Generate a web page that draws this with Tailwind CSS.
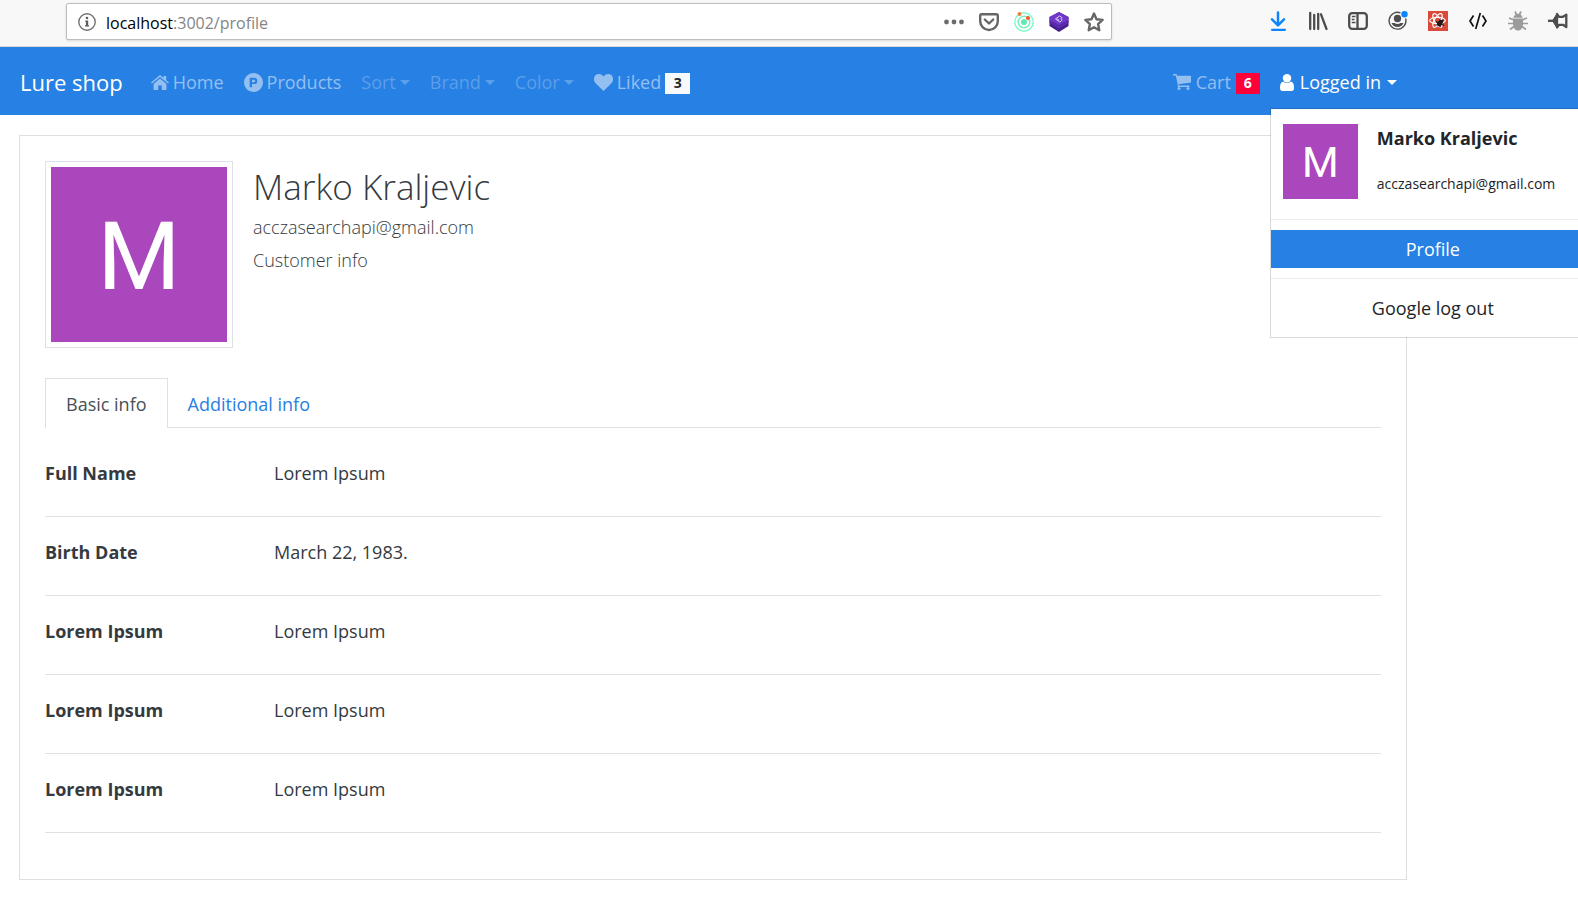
<!DOCTYPE html>
<html lang="en">
<head>
<meta charset="utf-8">
<title>Lure shop</title>
<script src="https://cdn.jsdelivr.net/npm/@tailwindcss/browser@4"></script>
</head>
<body class="min-h-screen overflow-x-hidden bg-white font-['Open_Sans','Noto_Sans',sans-serif] text-lg text-[#343a40]">

<!-- Browser toolbar -->
<div class="flex h-[47px] items-start border-b border-[#d8d8d8] bg-[#f8f8f8] pt-[3px] pr-[10px] pl-[66px] text-[#4d4d4f]">
  <div class="mr-[156px] flex h-[37px] flex-1 items-center rounded-xs border border-[#bcbcbc] bg-white px-[7px] shadow-sm">
    <button aria-label="Site information" class="p-1">
      <svg class="size-[18px]" viewBox="0 0 18 18"><circle cx="9" cy="9" r="8.2" fill="none" stroke="#737373" stroke-width="1.4"/><circle cx="9" cy="5" r="1.3" fill="#5e5e5e"/><path d="M7.2 7.5H10.200v4.800h.9v1.2H7v-1.2H7.900V8.700h-.7z" fill="#5e5e5e"/></svg>
    </button>
    <div class="ml-[6px] flex-1 pt-[2px] text-base"><span class="text-black">localhost</span><span class="text-[#858585]">:3002/profile</span></div>
    <div class="flex items-center gap-[15px]">
      <button aria-label="Page actions"><svg class="size-5" viewBox="0 0 20 20" fill="#6b6b6d"><circle cx="2.5" cy="10" r="2.4"/><circle cx="10" cy="10" r="2.4"/><circle cx="17.5" cy="10" r="2.4"/></svg></button>
      <button aria-label="Save to Pocket"><svg class="size-5" viewBox="0 0 20 20" fill="none" stroke="#666668" stroke-width="2.4" stroke-linecap="round" stroke-linejoin="round"><path d="M2.8 2.2h14.4q1.6 0 1.6 1.6v5.4a8.8 8.8 0 0 1-17.6 0V3.800q0-1.600 1.600-1.600z"/><path d="M5.800 7.500 10 11.500l4.200-4"/></svg></button>
      <button aria-label="Orbit extension"><svg class="size-5" viewBox="0 0 20 20" fill="none"><circle cx="10" cy="10" r="9.200" stroke="#7dfbd0" stroke-width="1.400"/><circle cx="10" cy="10" r="5.800" stroke="#72f2b4" stroke-width="1.400"/><circle cx="10" cy="10" r="3" fill="#5fe8b8"/><circle cx="5.500" cy="2" r="2" fill="#f47b3c"/><circle cx="14" cy="6" r="2.100" fill="#f4572c"/></svg></button>
      <button aria-label="Bootstrap extension"><svg class="size-5" viewBox="0 0 20 20"><path d="M10 0 19.500 5v9L10 20 .5 14V5z" fill="#45208c"/><path d="M.5 8 10 14l9.500-6v3L10 17 .5 11z" fill="#5a2bab"/><path d="M10 0 19.500 5v3L10 13.500.5 8V5z" fill="#7038c8"/><path d="m6.500 7 4-3 1.800 1c1.200.8.500 1.700-.5 1.900 1.200.2 1.500 1.300.4 2.100L10.800 10zM8 6.800l2.200 1.500" fill="none" stroke="#ded0f8" stroke-width="1"/></svg></button>
      <button aria-label="Bookmark this page"><svg class="size-5" viewBox="0 0 20 20" fill="none" stroke="#666668" stroke-width="2.400" stroke-linejoin="round"><path d="m10 1.600 2.500 5.600 6.100.7-4.500 4.200 1.200 6.100L10 15.200l-5.300 3 1.200-6.100-4.500-4.200 6.100-.7z"/></svg></button>
    </div>
  </div>
  <div class="flex h-[36px] items-center gap-5">
    <button aria-label="Downloads"><svg class="size-5" viewBox="0 0 20 20" fill="none" stroke="#0a84ff" stroke-width="2.500" stroke-linecap="round" stroke-linejoin="round"><path d="M10 1.500v12.500M4 8.300 10 14.300 16 8.300"/><path d="M4 18.800h13" stroke-width="2.200"/></svg></button>
    <button aria-label="Library"><svg class="size-5" viewBox="0 0 20 20" fill="none" stroke="#4d4d4f" stroke-width="2.300" stroke-linecap="round"><path d="M2.200 2v16M6.200 4v14M10.200 3v15M13 3.300l5.500 14.700" /></svg></button>
    <button aria-label="Sidebar"><svg class="size-5" viewBox="0 0 20 20" fill="none" stroke="#4d4d4f" stroke-width="2.300"><rect x="1.200" y="2.200" width="17.600" height="15.600" rx="3"/><path d="M9.500 2v16"/><path d="M3.800 5.500H7.500M3.800 8.500H6.500M3.800 11.500H7.500" stroke-width="1.300"/></svg></button>
    <button aria-label="Account"><svg class="size-5" viewBox="0 0 20 20"><path d="M12.500 1.900A8.400 8.400 0 1 0 17.600 7.500" fill="none" stroke="#4d4d4f" stroke-width="1.400"/><circle cx="9.500" cy="7.500" r="3.700" fill="#4d4d4f"/><path d="M3.500 12h3q3 2.200 6 0h3a6.500 6.500 0 0 1-12 0z" fill="#4d4d4f"/><circle cx="16.500" cy="3.300" r="3.200" fill="#0a84ff"/></svg></button>
    <button aria-label="React developer tools"><svg class="size-5" viewBox="0 0 20 20"><rect width="20" height="20" fill="#d94a38"/><g fill="none" stroke="#fff" stroke-width="1.200"><ellipse cx="9.500" cy="9.500" rx="7.800" ry="3.100"/><ellipse cx="9.500" cy="9.500" rx="7.800" ry="3.100" transform="rotate(60 9.500 9.500)"/><ellipse cx="9.500" cy="9.500" rx="7.800" ry="3.100" transform="rotate(120 9.500 9.500)"/></g><ellipse cx="12" cy="12" rx="2.400" ry="3.600" transform="rotate(40 12 12)" fill="#221a1a"/><path d="m8 10.500 8 4M8.500 14l7-5M12 7.500v9" stroke="#221a1a" stroke-width="1.100"/></svg></button>
    <button aria-label="Page source"><svg class="size-5" viewBox="0 0 20 20" fill="none" stroke="#111" stroke-width="1.700"><path d="M5.500 4.500 2 10l3.500 5.500M14.500 4.500l3.500 5.500-3.500 5.500M12.300 2 7.700 18"/></svg></button>
    <button aria-label="Bug tool"><svg class="size-5" viewBox="0 0 20 20" fill="none" stroke="#9b9b9b" stroke-width="1.700"><path d="M5 7.500h10v6q-.8 6-5 6t-5-6z" fill="#9b9b9b" stroke="none"/><path d="M6.500 6q1-2.500 3.500-2.500T13.500 6z" fill="#9b9b9b"/><path d="M7 .5 8.500 3.500M13 .5l-1.500 3M1 7l5 2M19 7l-5 2M0 12.500h20M2 18.500l4-3M18 18.500l-4-3"/></svg></button>
    <button aria-label="Pin"><svg class="size-5" viewBox="0 0 20 20" fill="none" stroke="#4d4d4f" stroke-width="2.300" stroke-linejoin="round"><path d="M0 9.800h8"/><path d="M4.500 9.800 8.700 3.200v13.200z" fill="#4d4d4f" stroke-width="1"/><path d="M9 3v13.500L11 13.800H15L18.300 16V3.600L15 5.800H11z"/></svg></button>
  </div>
</div>

<!-- Site navigation -->
<nav class="relative flex h-[68px] items-center bg-[#2780e3] pt-[2px] pr-[171px] pl-5 text-white/50">
  <a href="#" class="mr-[18px] text-[22px] text-white">Lure shop</a>
  <ul class="flex flex-1 items-center">
    <li><a href="#" class="flex items-center gap-1 px-[10px]">
      <svg class="h-[15px] w-[18px]" viewBox="0 0 18 15" fill="currentColor"><path d="M9 3.600 15.500 9v5.200q0 .8-.8.800H10.800V10.500H7.200V15H3.300q-.8 0-.8-.800V9z"/><path d="M9 0 12.500 2.900V1h2.700v4.200L18 7.500l-.9 1.100L9 2 .9 8.600 0 7.500z"/></svg>Home</a></li>
    <li><a href="#" class="flex items-center gap-1 px-[10px]">
      <svg class="size-[19px]" viewBox="0 0 20 20" fill="currentColor" fill-rule="evenodd"><path d="M10 0a10 10 0 1 1 0 20 10 10 0 0 1 0-20zM6 5v10h2.400v-3.300h2.200a3.350 3.350 0 0 0 0-6.700zm2.400 2h2a1.350 1.350 0 0 1 0 2.700h-2z"/></svg>Products</a></li>
    <li><button class="flex items-center gap-1 px-[10px] text-white/25">Sort<svg class="h-[5px] w-[10px]" viewBox="0 0 10 5" fill="currentColor"><path d="M0 0h10L5 5z"/></svg></button></li>
    <li><button class="flex items-center gap-1 px-[10px] text-white/25">Brand<svg class="h-[5px] w-[10px]" viewBox="0 0 10 5" fill="currentColor"><path d="M0 0h10L5 5z"/></svg></button></li>
    <li><button class="flex items-center gap-1 px-[10px] text-white/25">Color<svg class="h-[5px] w-[10px]" viewBox="0 0 10 5" fill="currentColor"><path d="M0 0h10L5 5z"/></svg></button></li>
    <li><a href="#" class="flex items-center gap-1 px-[10px]">
      <svg class="h-[17px] w-[19px]" viewBox="0 0 19 17" fill="currentColor"><path d="M9.500 17 1.600 9.300C-.6 7-.5 3.500 1.200 1.600 3.500-.8 7.300-.3 9.500 2.500c2.200-2.800 6-3.300 8.300-.9 1.700 1.900 1.800 5.400-.4 7.700z"/></svg>Liked
      <span class="mt-[2px] flex h-[21px] w-[25px] items-center justify-center bg-[#f8f9fa] text-sm font-bold text-[#212529]">3</span></a></li>
  </ul>
  <ul class="flex items-center">
    <li><a href="#" class="flex items-center gap-[5px] px-[10px]">
      <svg class="h-4 w-[18px]" viewBox="0 0 18 16" fill="currentColor"><path d="M0 0h3.500L4 1.800h14V8.500L5.600 10.200l.3 1.300H16.500v1.500H4.500L5 12 2.800 1.500H0z"/><circle cx="6" cy="14.500" r="1.500"/><circle cx="15" cy="14.500" r="1.500"/></svg>Cart
      <span class="mt-[2px] flex h-[21px] w-6 items-center justify-center bg-[#ff0039] text-sm font-bold text-white">6</span></a></li>
    <li class="relative">
      <button class="flex items-center gap-[6px] px-[10px] text-white" aria-expanded="true">
        <svg class="h-[17px] w-[14px]" viewBox="0 0 14 17" fill="currentColor"><circle cx="7" cy="4.200" r="4.200"/><path d="M3 7.500q4 3 8 0 3 .8 3 6.300Q14 17 11.500 17h-9Q0 17 0 13.800q0-5.500 3-6.300z"/></svg>Logged in<svg class="h-[5px] w-[10px]" viewBox="0 0 10 5" fill="currentColor"><path d="M0 0h10L5 5z"/></svg></button>
      <!-- Account menu -->
      <div class="absolute top-full left-0 z-10 mt-[12px] w-[326px] border border-black/15 bg-white bg-clip-padding text-[#212529]">
        <div class="flex h-[110px] gap-[19px] pt-[15px] pl-3">
          <div class="flex size-[75px] items-center justify-center bg-[#ab47bc] pt-[2px] font-[Roboto] text-[42px] font-normal text-white" aria-hidden="true">M</div>
          <div>
            <p class="leading-[28px] font-bold">Marko Kraljevic</p>
            <p class="mt-[18px] text-sm leading-7">acczasearchapi@gmail.com</p>
          </div>
        </div>
        <hr class="border-[#e9ecef]">
        <a href="#" class="my-[10px] flex h-[38px] items-center justify-center bg-[#2780e3] text-white">Profile</a>
        <hr class="border-[#e9ecef]">
        <button class="flex h-[58px] w-full items-center justify-center">Google log out</button>
      </div>
    </li>
  </ul>
</nav>

<!-- Profile card -->
<main class="mt-5 mr-[171px] ml-[19px] border border-[#dfdfdf] px-[25px] pt-[25px] pb-[46px]">
  <header class="flex gap-5">
    <div class="border border-[#dee2e6] p-[5px]">
      <div class="flex h-[175px] w-[176px] items-center justify-center bg-[#ab47bc] pt-1 font-[Roboto] text-[95px] font-normal text-white" aria-hidden="true">M</div>
    </div>
    <div>
      <h1 class="pt-[2px] text-[35px] leading-[48px] font-light">Marko Kraljevic</h1>
      <p class="leading-[33px] font-light">acczasearchapi@gmail.com</p>
      <p class="leading-[33px] font-light">Customer info</p>
    </div>
  </header>

  <div class="mt-[30px] flex border-b border-[#dee2e6]" role="tablist">
    <button role="tab" aria-selected="true" class="-mb-px h-[50px] border border-b-0 border-[#dee2e6] bg-white px-5 text-[#495057]">Basic info</button>
    <button role="tab" aria-selected="false" class="px-5 pt-[2px] text-[#2780e3]">Additional info</button>
  </div>

  <dl class="pt-[10px]">
    <div class="flex h-[79px] border-b border-[#e1e1e1] pt-[21px]"><dt class="w-[229px] font-bold">Full Name</dt><dd>Lorem Ipsum</dd></div>
    <div class="flex h-[79px] border-b border-[#e1e1e1] pt-[21px]"><dt class="w-[229px] font-bold">Birth Date</dt><dd>March 22, 1983.</dd></div>
    <div class="flex h-[79px] border-b border-[#e1e1e1] pt-[21px]"><dt class="w-[229px] font-bold">Lorem Ipsum</dt><dd>Lorem Ipsum</dd></div>
    <div class="flex h-[79px] border-b border-[#e1e1e1] pt-[21px]"><dt class="w-[229px] font-bold">Lorem Ipsum</dt><dd>Lorem Ipsum</dd></div>
    <div class="flex h-[79px] border-b border-[#e1e1e1] pt-[21px]"><dt class="w-[229px] font-bold">Lorem Ipsum</dt><dd>Lorem Ipsum</dd></div>
  </dl>
</main>
</body>
</html>
